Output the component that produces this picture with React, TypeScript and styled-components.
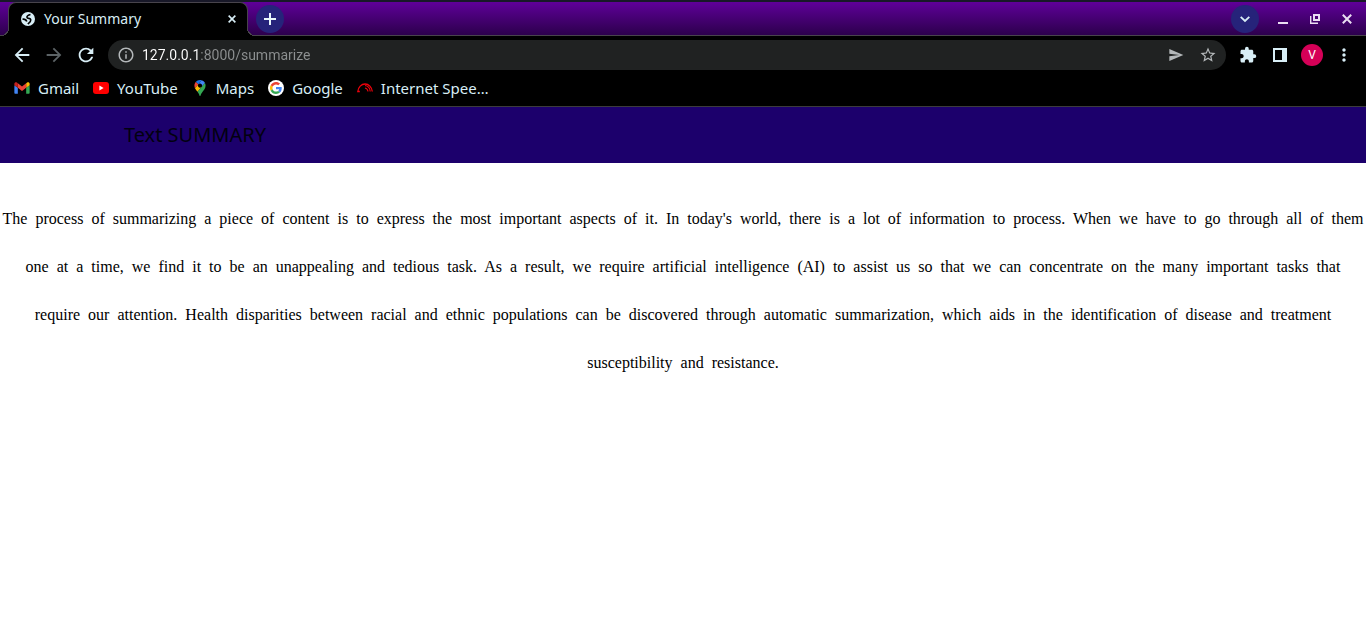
import React from "react";
import styled, { createGlobalStyle } from "styled-components";
import {
  MdArrowBack,
  MdArrowForward,
  MdExtension,
  MdInfoOutline,
  MdMoreVert,
  MdRefresh,
  MdSend,
  MdStarBorder,
} from "react-icons/md";

const GlobalStyle = createGlobalStyle`
  * { box-sizing: border-box; }
  body { margin: 0; background: #fff; }
  button { margin: 0; padding: 0; border: 0; background: none; font: inherit; color: inherit; cursor: pointer; }
  svg { display: block; flex: none; }
`;

const uiFont = `"Noto Sans", "Open Sans", sans-serif`;
const line = "#48444c";

const Browser = styled.div`
  font-family: ${uiFont};
  font-size: 14px;
  line-height: 20px;
  color: #d8eef6;
  background: #000;
`;

const TabStrip = styled.div`
  display: flex;
  align-items: center;
  height: 36px;
  padding: 0 3px 0 8px;
  border-top: 2px solid #181828;
  border-bottom: 1px solid ${line};
  background: linear-gradient(#5f0099, #2c004c);
`;

const Tab = styled.div`
  position: relative;
  display: flex;
  align-items: center;
  align-self: stretch;
  width: 240px;
  margin-bottom: -1px;
  padding: 0 10px 2px 12px;
  gap: 9px;
  background: #000;
  border: 1px solid ${line};
  border-bottom: 0;
  border-radius: 8px 8px 0 0;

  &::before,
  &::after {
    content: "";
    position: absolute;
    bottom: 0;
    width: 8px;
    height: 8px;
  }
  &::before {
    right: 100%;
    background: radial-gradient(circle at 0 0, transparent 7px, ${line} 7px, ${line} 8px, #000 8px);
  }
  &::after {
    left: 100%;
    background: radial-gradient(circle at 100% 0, transparent 7px, ${line} 7px, ${line} 8px, #000 8px);
  }
`;

const TabTitle = styled.span`
  flex: 1;
`;

const TabClose = styled.button`
  display: grid;
  place-items: center;
  width: 10px;
  height: 14px;
`;

const RoundButton = styled.button`
  display: grid;
  place-items: center;
  width: 28px;
  height: 28px;
  margin: 0 8px;
  border-radius: 50%;
  background: #26237a;
`;

const Spacer = styled.div`
  flex: 1;
`;

const WindowButton = styled.button`
  display: grid;
  place-items: center;
  width: 32px;
  height: 32px;
  color: #eadff2;
`;

const Toolbar = styled.div`
  display: flex;
  align-items: center;
  height: 38px;
  padding: 0 6px;
`;

const ToolButton = styled.button<{ $muted?: boolean }>`
  display: grid;
  place-items: center;
  flex: none;
  width: 32px;
  height: 32px;
  color: ${(p) => (p.$muted ? "#5c6366" : "#d8eef6")};
`;

const AddressBar = styled.form`
  display: flex;
  align-items: center;
  flex: 1;
  height: 30px;
  margin: 0 6px;
  padding: 0 2px;
  border-radius: 15px;
  background: #202222;
`;

const AddressButton = styled.button`
  display: grid;
  place-items: center;
  flex: none;
  width: 32px;
  height: 30px;
  color: #b4b8ba;
`;

const AddressInput = styled.input`
  flex: 1;
  min-width: 0;
  height: 20px;
  padding: 0;
  border: 0;
  outline: 0;
  font-family: Roboto, "Noto Sans", sans-serif;
  font-size: 14px;
  line-height: 20px;
  color: #8d9091;
  background: linear-gradient(90deg, #fff 58px, #8d9091 58px);
  background-clip: text;
  -webkit-text-fill-color: transparent;
`;

const Avatar = styled.span`
  display: grid;
  place-items: center;
  width: 22px;
  height: 22px;
  border-radius: 50%;
  background: #d50057;
  color: #fff;
  font-family: Roboto, "Noto Sans", sans-serif;
  font-size: 12px;
`;

const Bookmarks = styled.nav`
  display: flex;
  align-items: center;
  gap: 14px;
  height: 33px;
  padding: 0 14px 4px;
  border-bottom: 1px solid #3c3c3c;
  font-size: 15px;
`;

const Bookmark = styled.a`
  display: flex;
  align-items: center;
  gap: 8px;
  color: inherit;
  text-decoration: none;
  white-space: nowrap;
`;

const PageHeader = styled.header`
  display: flex;
  align-items: center;
  height: 56px;
  padding: 0 124px;
  background: #1c006c;
`;

const Brand = styled.h1`
  margin: 0;
  font-family: ${uiFont};
  font-size: 20px;
  font-weight: 400;
  line-height: 26px;
  color: #020010;
`;

const Summary = styled.p`
  margin: 0;
  padding-top: 32px;
  font-family: "Liberation Serif", "Times New Roman", serif;
  font-size: 16px;
  line-height: 48px;
  color: #000;
  text-align: center;
  white-space: pre-wrap;
`;

const GlobeIcon = () => (
  <svg width="14" height="14" viewBox="0 0 14 14" aria-hidden="true">
    <circle cx="7" cy="7" r="7" fill="currentColor" />
    <path
      d="M9.5 2.500C7.500 3 5.500 4 6 5.400s3.600.6 3.800 2.400-1.600 3-3 4.200M1.500 7.200c1.500-.2 3.500.4 4.300 2.300"
      fill="none"
      stroke="#000"
      strokeWidth="1.600"
    />
  </svg>
);

const GmailIcon = () => (
  <svg width="16" height="16" viewBox="50 29 92 92" aria-hidden="true">
    <path fill="#4285f4" d="M58 108h14V74L52 59v43c0 3.32 2.69 6 6 6" />
    <path fill="#34a853" d="M120 108h14c3.32 0 6-2.69 6-6V59l-20 15" />
    <path fill="#fbbc04" d="M120 48v26l20-15v-8c0-7.42-8.47-11.65-14.4-7.2" />
    <path fill="#ea4335" d="M72 74V48l24 18 24-18v26L96 92" />
    <path fill="#c5221f" d="M52 51v8l20 15V48l-5.6-4.2c-5.94-4.45-14.4-.22-14.4 7.2" />
  </svg>
);

const YouTubeIcon = () => (
  <svg width="16" height="16" viewBox="0 0 16 16" aria-hidden="true">
    <rect x="0" y="2" width="16" height="12" rx="3" fill="#f00" />
    <path d="M6.4 5.6v4.8l4.2-2.4z" fill="#fff" />
  </svg>
);

const MapsIcon = () => (
  <svg width="16" height="16" viewBox="-20 0 132.3 132.3" aria-hidden="true">
    <path fill="#1a73e8" d="M60.2 2.2C55.8.8 51 0 46.1 0 32 0 19.3 6.4 10.8 16.5l21.8 18.3L60.2 2.2z" />
    <path fill="#ea4335" d="M10.8 16.5C4.1 24.5 0 34.9 0 46.1c0 8.7 1.7 15.7 4.6 22l28-33.3-21.8-18.3z" />
    <path fill="#4285f4" d="M46.2 28.5c9.8 0 17.7 7.9 17.7 17.7 0 4.3-1.6 8.3-4.2 11.4 0 0 13.9-16.6 27.5-32.7-5.6-10.8-15.3-19-27-22.7L32.6 34.8c3.3-3.8 8.1-6.3 13.6-6.3" />
    <path fill="#fbbc04" d="M46.2 63.8c-9.8 0-17.7-7.9-17.7-17.7 0-4.3 1.5-8.3 4.1-11.3l-28 33.3c4.8 10.6 12.8 19.2 21 29.9l34.1-40.5c-3.3 3.9-8.1 6.3-13.5 6.3" />
    <path fill="#34a853" d="M59.1 109.2c15.4-24.1 33.3-35 33.3-63 0-7.7-1.9-14.9-5.2-21.3L25.6 98c2.6 3.4 5.3 7.3 7.9 11.3 9.4 14.5 6.8 23.1 12.8 23.1s3.4-8.7 12.8-23.2" />
  </svg>
);

const GoogleIcon = () => (
  <svg width="16" height="16" viewBox="0 0 48 48" aria-hidden="true">
    <circle cx="24" cy="24" r="24" fill="#fff" />
    <g transform="translate(6 6) scale(.75)">
      <path fill="#ea4335" d="M24 9.5c3.54 0 6.71 1.22 9.21 3.6l6.85-6.85C35.9 2.38 30.47 0 24 0 14.62 0 6.51 5.38 2.56 13.22l7.98 6.19C12.43 13.72 17.74 9.5 24 9.5z" />
      <path fill="#4285f4" d="M46.98 24.55c0-1.57-.15-3.09-.38-4.55H24v9.02h12.94c-.58 2.96-2.26 5.48-4.78 7.18l7.73 6c4.51-4.18 7.09-10.36 7.09-17.65z" />
      <path fill="#fbbc05" d="M10.53 28.59c-.48-1.45-.76-2.99-.76-4.59s.27-3.14.76-4.59l-7.98-6.19C.92 16.46 0 20.12 0 24s.92 7.54 2.56 10.78l7.97-6.19z" />
      <path fill="#34a853" d="M24 48c6.48 0 11.93-2.13 15.89-5.81l-7.73-6c-2.15 1.45-4.92 2.3-8.16 2.3-6.26 0-11.57-4.22-13.47-9.91l-7.98 6.19C6.51 42.62 14.62 48 24 48z" />
    </g>
  </svg>
);

const SpeedIcon = () => (
  <svg width="16" height="16" viewBox="0 0 16 16" fill="none" stroke="#f0000b" aria-hidden="true">
    <path d="M2.800 11.500H.8A7.300 8.500 0 0 1 15.300 11.500" strokeWidth="1.300" />
    <path d="M8 5.500A6 6.500 0 0 1 13.200 11.500" strokeWidth="1.100" />
    <path d="M8 8A4 4 0 0 1 11 11.500" strokeWidth="1.100" />
  </svg>
);

const PlusIcon = () => (
  <svg width="12" height="12" viewBox="0 0 12 12" stroke="#e8f6fc" strokeWidth="2" aria-hidden="true">
    <path d="M6 0v12M0 6h12" />
  </svg>
);

const ChevronIcon = () => (
  <svg width="10" height="10" viewBox="0 0 10 10" fill="none" stroke="#d8eef6" strokeWidth="1.800" aria-hidden="true">
    <path d="M.7 2.800L5 7l4.300-4.200" />
  </svg>
);

const MinimizeIcon = () => (
  <svg width="10" height="10" viewBox="0 0 10 10" aria-hidden="true">
    <path d="M0 8h10v2H0z" fill="currentColor" />
  </svg>
);

const RestoreIcon = () => (
  <svg width="10" height="10" viewBox="0 0 10 10" fill="none" stroke="currentColor" aria-hidden="true">
    <path d="M4 1h5v5H4z" strokeWidth="2" />
    <path d="M.7 2v7.300H8" strokeWidth="1.400" />
  </svg>
);

const CloseIcon = ({ size, weight }: { size: number; weight: number }) => (
  <svg width={size} height={size} viewBox="0 0 10 10" stroke="currentColor" strokeWidth={weight} aria-hidden="true">
    <path d="M.8.8l8.400 8.400M9.200.8L.8 9.200" />
  </svg>
);

const SidePanelIcon = () => (
  <svg width="14" height="14" viewBox="0 0 14 14" fill="currentColor" aria-hidden="true">
    <path fillRule="evenodd" d="M0 0h14v14H0zM2 2v10h7V2z" />
  </svg>
);

const bookmarks = [
  { label: "Gmail", Icon: GmailIcon },
  { label: "YouTube", Icon: YouTubeIcon },
  { label: "Maps", Icon: MapsIcon },
  { label: "Google", Icon: GoogleIcon },
  { label: "Internet Spee…", Icon: SpeedIcon },
];

const sentences =
  "The process of summarizing a piece of content is to express the most important aspects of it. In today's world, there is a lot of information to process. When we have to go through all of them one at a time, we find it to be an unappealing and tedious task. As a result, we require artificial intelligence (AI) to assist us so that we can concentrate on the many important tasks that require our attention. Health disparities between racial and ethnic populations can be discovered through automatic summarization, which aids in the identification of disease and treatment susceptibility and resistance.";

const summary = sentences.split(" ").join("  ");

export default function App() {
  return (
    <>
      <GlobalStyle />
      <Browser>
        <TabStrip>
          <Tab>
            <GlobeIcon />
            <TabTitle>Your Summary</TabTitle>
            <TabClose aria-label="Close tab">
              <CloseIcon size={8} weight={2} />
            </TabClose>
          </Tab>
          <RoundButton aria-label="New tab">
            <PlusIcon />
          </RoundButton>
          <Spacer />
          <RoundButton aria-label="Search tabs">
            <ChevronIcon />
          </RoundButton>
          <WindowButton aria-label="Minimize">
            <MinimizeIcon />
          </WindowButton>
          <WindowButton aria-label="Restore">
            <RestoreIcon />
          </WindowButton>
          <WindowButton aria-label="Close window">
            <CloseIcon size={10} weight={2} />
          </WindowButton>
        </TabStrip>
        <Toolbar>
          <ToolButton aria-label="Back">
            <MdArrowBack size={22} />
          </ToolButton>
          <ToolButton aria-label="Forward" $muted>
            <MdArrowForward size={22} />
          </ToolButton>
          <ToolButton aria-label="Reload">
            <MdRefresh size={22} />
          </ToolButton>
          <AddressBar onSubmit={(e) => e.preventDefault()}>
            <AddressButton type="button" aria-label="Site information">
              <MdInfoOutline size={18} />
            </AddressButton>
            <AddressInput aria-label="Address" defaultValue="127.0.0.1:8000/summarize" spellCheck={false} />
            <AddressButton type="button" aria-label="Share">
              <MdSend size={16} />
            </AddressButton>
            <AddressButton type="button" aria-label="Bookmark this page">
              <MdStarBorder size={18} />
            </AddressButton>
          </AddressBar>
          <ToolButton aria-label="Extensions">
            <MdExtension size={18} />
          </ToolButton>
          <ToolButton aria-label="Side panel">
            <SidePanelIcon />
          </ToolButton>
          <ToolButton aria-label="Profile">
            <Avatar>V</Avatar>
          </ToolButton>
          <ToolButton aria-label="Menu">
            <MdMoreVert size={20} />
          </ToolButton>
        </Toolbar>
        <Bookmarks aria-label="Bookmarks">
          {bookmarks.map(({ label, Icon }) => (
            <Bookmark key={label} href="#">
              <Icon />
              {label}
            </Bookmark>
          ))}
        </Bookmarks>
      </Browser>
      <PageHeader>
        <Brand>Text SUMMARY</Brand>
      </PageHeader>
      <main>
        <Summary>{summary}</Summary>
      </main>
    </>
  );
}
